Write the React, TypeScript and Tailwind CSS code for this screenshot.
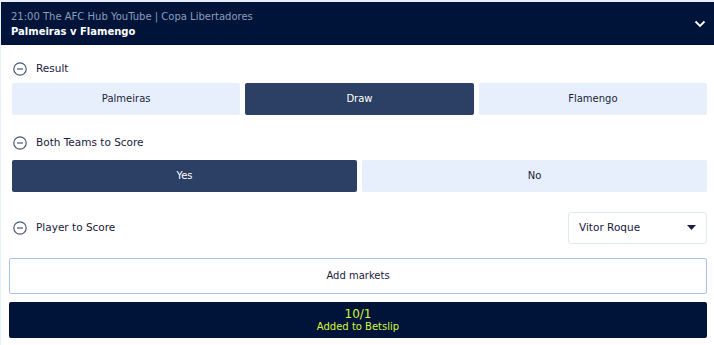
import { FC } from "react";

const MinusCircle: FC = () => (
  <svg width="14" height="14" viewBox="0 0 14 14" fill="none">
    <circle cx="7" cy="7" r="6.2" stroke="#4a5878" strokeWidth="1.2" />
    <line x1="4" y1="7" x2="10" y2="7" stroke="#4a5878" strokeWidth="1.2" />
  </svg>
);

interface OptionProps {
  label: string;
  selected?: boolean;
}

const Option: FC<OptionProps> = ({ label, selected }) => (
  <button
    className={
      selected
        ? "flex-1 h-8 rounded-[2px] bg-[#2c3f64] text-white text-[10px]"
        : "flex-1 h-8 rounded-[2px] bg-[#e8effc] text-[#1a1f3a] text-[10px]"
    }
  >
    {label}
  </button>
);

const MarketTitle: FC<{ title: string }> = ({ title }) => (
  <div className="flex items-center gap-[9px] pl-[12px] text-[10.5px] text-[#1a2040]">
    <MinusCircle />
    <span>{title}</span>
  </div>
);

export default function App() {
  return (
    <div
      className="w-[714px] h-[345px] bg-[#e9eff9] pt-[2px] pl-[1px]"
      style={{ fontFamily: '"DejaVu Sans", Verdana, sans-serif' }}
    >
      <div className="bg-white h-full">
        <div className="bg-[#00143a] h-[43px] flex items-center justify-between pl-[10px] pr-[8px]">
          <div className="flex flex-col leading-[15px]">
            <span className="text-[10px] text-[#8d9cb9]">
              21:00 The AFC Hub YouTube | Copa Libertadores
            </span>
            <span className="text-[10px] font-bold text-white">
              Palmeiras v Flamengo
            </span>
          </div>
          <svg width="12" height="8" viewBox="0 0 12 8" fill="none">
            <path d="M1.5 1.5 L6 6 L10.5 1.5" stroke="white" strokeWidth="1.8" />
          </svg>
        </div>

        <div className="pt-[16px]">
          <MarketTitle title="Result" />
          <div className="flex gap-[5px] pl-[11px] pr-[7px] mt-[6px]">
            <Option label="Palmeiras" />
            <Option label="Draw" selected />
            <Option label="Flamengo" />
          </div>
        </div>

        <div className="pt-[20px]">
          <MarketTitle title="Both Teams to Score" />
          <div className="flex gap-[5px] pl-[11px] pr-[7px] mt-[9px]">
            <Option label="Yes" selected />
            <Option label="No" />
          </div>
        </div>

        <div className="flex items-center justify-between pr-[7px] mt-[20px]">
          <MarketTitle title="Player to Score" />
          <div className="w-[139px] h-[32px] border border-[#e3e9f4] rounded-[3px] flex items-center justify-between pl-[10px] pr-[10px] text-[10.5px] text-[#1a2040]">
            <span>Vitor Roque</span>
            <svg width="9" height="5" viewBox="0 0 9 5">
              <path d="M0 0 L9 0 L4.5 5 Z" fill="#1a2040" />
            </svg>
          </div>
        </div>

        <div className="pl-[8px] pr-[7px] mt-[14px]">
          <button className="w-full h-[36px] border border-[#a9c3ef] rounded-[2px] bg-white text-[10px] text-[#1a2040]">
            Add markets
          </button>
          <button className="w-full h-[36px] mt-[8px] rounded-[2px] bg-[#00143a] flex flex-col items-center justify-center text-[#d8f53c]">
            <span className="text-[12px] leading-[13px]">10/1</span>
            <span className="text-[10px] leading-[11px]">Added to Betslip</span>
          </button>
        </div>
      </div>
    </div>
  );
}
